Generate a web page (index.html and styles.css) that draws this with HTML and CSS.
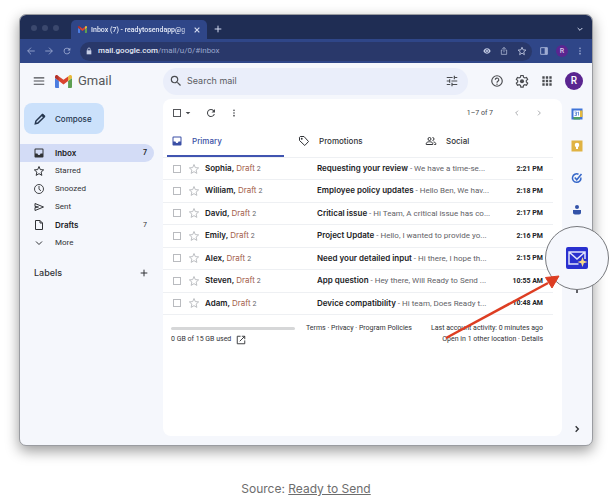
FILE: index.html
```html
<!DOCTYPE html>
<html lang="en">
<head>
<meta charset="utf-8">
<meta name="viewport" content="width=device-width, initial-scale=1">
<title>Inbox (7) - Gmail</title>
<link rel="stylesheet" href="styles.css">
</head>
<body>
<svg class="sprite" aria-hidden="true">
  <symbol id="star" viewBox="0 0 24 24"><path d="M12 3l2.6 6.2 6.7.6-5.1 4.4 1.5 6.6L12 17.3l-5.7 3.5 1.5-6.6L2.7 9.8l6.7-.6z" fill="none" stroke="currentColor" stroke-width="2"/></symbol>
  <symbol id="inbox" viewBox="0 0 24 24"><path d="M19 3H5a2 2 0 0 0-2 2v14c0 1.100.9 2 2 2h14a2 2 0 0 0 2-2V5a2 2 0 0 0-2-2zm0 10h-4c0 1.700-1.300 3-3 3s-3-1.300-3-3H5V5h14z" fill="currentColor"/></symbol>
  <symbol id="reload" viewBox="0 0 24 24"><path d="M17.650 6.350A8 8 0 1 0 19.730 14h-2.080A6 6 0 1 1 12 6c1.660 0 3.140.690 4.220 1.780L13 11h7V4z" fill="currentColor"/></symbol>
  <symbol id="dots" viewBox="0 0 24 24"><g fill="currentColor"><circle cx="12" cy="4" r="2.500"/><circle cx="12" cy="12" r="2.500"/><circle cx="12" cy="20" r="2.500"/></g></symbol>
  <symbol id="left" viewBox="0 0 24 24"><path d="M15 5l-7 7 7 7" fill="none" stroke="currentColor" stroke-width="2.500"/></symbol>
  <symbol id="right" viewBox="0 0 24 24"><path d="M9 5l7 7-7 7" fill="none" stroke="currentColor" stroke-width="2.500"/></symbol>
  <symbol id="down" viewBox="0 0 24 24"><path d="M5 9l7 7 7-7" fill="none" stroke="currentColor" stroke-width="3"/></symbol>
  <symbol id="plus" viewBox="0 0 24 24"><path d="M12 2v20M2 12h20" fill="none" stroke="currentColor" stroke-width="3"/></symbol>
  <symbol id="mark" viewBox="0 0 52 39"><path d="M3 39h9V18L0 9v27a3 3 0 0 0 3 3z" fill="#4c7de0"/><path d="M40 39h9a3 3 0 0 0 3-3V9l-12 9z" fill="#5d9f52"/><path d="M40 4v14l12-9V5c0-4.500-5-6.500-8.500-4z" fill="#e9b93c"/><path d="M12 18V4l14 10.500L40 4v14L26 28.500z" fill="#d9432f"/><path d="M0 5v4l12 9V4L8.500 1C5 -1.500 0 .5 0 5z" fill="#b5322a"/></symbol>
</svg>

<figure class="shot">
  <div class="window">
    <header class="tabstrip">
      <span class="lights"><i></i><i></i><i></i></span>
      <div class="tab">
        <svg class="tab-logo"><use href="#mark"/></svg>
        <span class="tab-title">Inbox (7) - readytosendapp@g</span>
        <button class="bare" aria-label="Close tab"><svg class="i8" viewBox="0 0 24 24"><path d="M5 5l14 14M19 5L5 19" stroke="currentColor" stroke-width="3.500"/></svg></button>
      </div>
      <button class="bare new-tab" aria-label="New tab"><svg class="i8"><use href="#plus"/></svg></button>
      <button class="bare tab-menu" aria-label="Search tabs"><svg class="i8"><use href="#down"/></svg></button>
    </header>

    <nav class="browser-bar" aria-label="Browser">
      <button class="bare" aria-label="Back"><svg class="i10" viewBox="0 0 24 24"><path d="M21 12H4m8-8l-8 8 8 8" fill="none" stroke="currentColor" stroke-width="2"/></svg></button>
      <button class="bare" aria-label="Forward"><svg class="i10" viewBox="0 0 24 24"><path d="M3 12h17m-8-8l8 8-8 8" fill="none" stroke="currentColor" stroke-width="2"/></svg></button>
      <button class="bare" aria-label="Reload"><svg class="i10"><use href="#reload"/></svg></button>
      <div class="address">
        <svg class="i8" viewBox="0 0 24 24"><path d="M5 10h14v12H5z" fill="currentColor"/><path d="M8 11V7a4 4 0 0 1 8 0v4" fill="none" stroke="currentColor" stroke-width="2.500"/></svg>
        <div class="url" role="textbox" contenteditable="true" spellcheck="false" aria-label="Address">mail.google.com<span>/mail/u/0/#inbox</span></div>
        <button class="bare" aria-label="View"><svg class="i8" viewBox="0 0 24 24"><path d="M1 12C4 6 8 4 12 4s8 2 11 8c-3 6-7 8-11 8S4 18 1 12z" fill="currentColor"/><circle cx="12" cy="12" r="4.500" fill="none" stroke="#29386a" stroke-width="2"/></svg></button>
        <button class="bare" aria-label="Share"><svg class="i8" viewBox="0 0 24 24"><path d="M8 9H4v13h16V9h-4M12 16V2M7 6l5-5 5 5" fill="none" stroke="currentColor" stroke-width="2"/></svg></button>
        <button class="bare" aria-label="Bookmark"><svg class="i10"><use href="#star"/></svg></button>
      </div>
      <button class="bare" aria-label="Side panel"><svg class="i8" viewBox="0 0 24 24"><path d="M2 2h20v20H2z" fill="none" stroke="currentColor" stroke-width="3"/><path d="M14 2h8v20h-8z" fill="currentColor"/></svg></button>
      <button class="avatar small" aria-label="Profile">R</button>
      <button class="bare" aria-label="Menu"><svg class="i8"><use href="#dots"/></svg></button>
    </nav>

    <div class="gmail">
      <header class="topbar">
        <div class="brand">
          <button class="bare" aria-label="Main menu"><svg class="i14" viewBox="0 0 24 24"><path d="M3 6.500h18M3 12h18M3 17.500h18" stroke="currentColor" stroke-width="2"/></svg></button>
          <svg class="logo"><use href="#mark"/></svg>
          <span class="wordmark">Gmail</span>
        </div>
        <form class="search">
          <button type="button" class="bare" aria-label="Search"><svg class="i14" viewBox="0 0 24 24"><path d="M15.500 14h-.790l-.280-.270A6.471 6.471 0 0 0 16 9.500 6.500 6.500 0 1 0 9.500 16c1.610 0 3.090-.590 4.230-1.570l.270.280v.790l5 4.990L20.490 19zm-6 0C7.010 14 5 11.990 5 9.500S7.010 5 9.500 5 14 7.010 14 9.500 11.990 14 9.500 14z" fill="currentColor"/></svg></button>
          <input type="text" placeholder="Search mail" aria-label="Search mail">
          <button type="button" class="bare" aria-label="Search options"><svg class="i14" viewBox="0 0 24 24"><path d="M3 17v2h6v-2zM3 5v2h10V5zm10 16v-2h8v-2h-8v-2h-2v6zM7 9v2H3v2h4v2h2V9zm14 4v-2H11v2zm-6-4h2V7h4V5h-4V3h-2z" fill="currentColor"/></svg></button>
        </form>
        <div class="account">
          <button class="bare" aria-label="Support"><svg class="i14" viewBox="0 0 24 24"><circle cx="12" cy="12" r="9" fill="none" stroke="currentColor" stroke-width="2"/><path d="M9 10a3 3 0 1 1 4.500 2.500C12.300 13.300 12 13.700 12 15" fill="none" stroke="currentColor" stroke-width="2"/><circle cx="12" cy="17.500" r="1.200" fill="currentColor"/></svg></button>
          <button class="bare" aria-label="Settings"><svg class="i14" viewBox="0 0 24 24"><path d="M10 2.500h4l.6 3 2.200 1.300 2.900-1 2 3.500-2.300 1.900v2.600l2.300 1.900-2 3.500-2.900-1-2.200 1.300-.6 3h-4l-.6-3-2.200-1.300-2.900 1-2-3.500 2.300-1.900v-2.600L2.300 9.300l2-3.500 2.900 1 2.200-1.300z" fill="none" stroke="currentColor" stroke-width="2"/><circle cx="12" cy="12.500" r="3.500" fill="currentColor"/></svg></button>
          <button class="bare" aria-label="Google apps"><svg class="i14" viewBox="0 0 24 24"><path d="M4 4h4v4H4zm6 0h4v4h-4zm6 0h4v4h-4zM4 10h4v4H4zm6 0h4v4h-4zm6 0h4v4h-4zM4 16h4v4H4zm6 0h4v4h-4zm6 0h4v4h-4z" fill="currentColor"/></svg></button>
          <button class="avatar" aria-label="Account">R</button>
        </div>
      </header>

      <aside class="sidebar">
        <button class="compose"><svg class="i14" viewBox="0 0 24 24"><path d="M4 20l1-4.500L16 4.500 19.500 8 8.500 19z" fill="none" stroke="currentColor" stroke-width="2.500"/><path d="M14 6l3-3.200 4.200 4.200L18 10z" fill="currentColor"/></svg>Compose</button>
        <nav class="folders" aria-label="Folders">
          <a href="#inbox" class="current"><svg class="i12"><use href="#inbox"/></svg><b>Inbox</b><b class="count">7</b></a>
          <a href="#starred"><svg class="i12"><use href="#star"/></svg>Starred</a>
          <a href="#snoozed"><svg class="i12" viewBox="0 0 24 24"><circle cx="12" cy="12" r="9" fill="none" stroke="currentColor" stroke-width="1.800"/><path d="M12 6v6.500l4 3" fill="none" stroke="currentColor" stroke-width="1.800"/></svg>Snoozed</a>
          <a href="#sent"><svg class="i12" viewBox="0 0 24 24"><path d="M4 5l17 7-17 7v-6l7-1-7-1z" fill="none" stroke="currentColor" stroke-width="2"/></svg>Sent</a>
          <a href="#drafts"><svg class="i12" viewBox="0 0 24 24"><path d="M5 3h9l5 5v13H5zM14 3v5h5" fill="none" stroke="currentColor" stroke-width="2"/></svg><b>Drafts</b><span class="count">7</span></a>
          <a href="#more"><svg class="i12" viewBox="0 0 24 24"><path d="M6 9l6 6 6-6" fill="none" stroke="currentColor" stroke-width="2"/></svg>More</a>
        </nav>
        <div class="labels"><h2>Labels</h2><button class="bare" aria-label="Create label"><svg class="i8"><use href="#plus"/></svg></button></div>
      </aside>

      <main class="panel">
        <div class="tools">
          <input type="checkbox" aria-label="Select all">
          <button class="bare caret" aria-label="Select menu"><svg class="i8" viewBox="0 0 24 24"><path d="M5 9h14l-7 7z" fill="currentColor"/></svg></button>
          <button class="bare refresh" aria-label="Refresh"><svg class="i12"><use href="#reload"/></svg></button>
          <button class="bare kebab" aria-label="More"><svg class="i8"><use href="#dots"/></svg></button>
          <span class="range">1–7 of 7</span>
          <button class="bare pager" aria-label="Newer"><svg class="i8"><use href="#left"/></svg></button>
          <button class="bare pager" aria-label="Older"><svg class="i8"><use href="#right"/></svg></button>
        </div>

        <nav class="tabs" aria-label="Categories">
          <a href="#primary" class="active"><svg class="i12"><use href="#inbox"/></svg>Primary</a>
          <a href="#promotions"><svg class="i12" viewBox="0 0 24 24"><path d="M3 4.500L4.500 3H12l9 10-7.500 8L3 11z" fill="none" stroke="currentColor" stroke-width="2"/><circle cx="7.500" cy="7.500" r="1.800" fill="currentColor"/></svg>Promotions</a>
          <a href="#social"><svg class="i12" viewBox="0 0 24 24"><g fill="none" stroke="currentColor" stroke-width="2"><circle cx="9" cy="8" r="3"/><path d="M2.500 19v-2c0-2 3-3.500 6.500-3.500s6.500 1.500 6.500 3.500v2z"/><path d="M15 5a3 3 0 0 1 0 6M17 14c3 .5 4.500 1.500 4.500 3v2h-3"/></g></svg>Social</a>
        </nav>

        <table class="mail">
          <colgroup><col class="c-check"><col class="c-star"><col class="c-name"><col class="c-subject"><col class="c-time"></colgroup>
          <tbody>
            <tr><td><input type="checkbox" aria-label="Select Sophia"></td><td><button class="bare" aria-label="Star"><svg class="i12"><use href="#star"/></svg></button></td><td><b>Sophia,</b> <em>Draft</em> <small>2</small></td><td class="subject"><b>Requesting your review</b> - We have a time-se...</td><td class="time">2:21 PM</td></tr>
            <tr><td><input type="checkbox" aria-label="Select William"></td><td><button class="bare" aria-label="Star"><svg class="i12"><use href="#star"/></svg></button></td><td><b>William,</b> <em>Draft</em> <small>2</small></td><td class="subject"><b>Employee policy updates</b> - Hello Ben, We hav...</td><td class="time">2:18 PM</td></tr>
            <tr><td><input type="checkbox" aria-label="Select David"></td><td><button class="bare" aria-label="Star"><svg class="i12"><use href="#star"/></svg></button></td><td><b>David,</b> <em>Draft</em> <small>2</small></td><td class="subject"><b>Critical issue</b> - Hi Team, A critical issue has co...</td><td class="time">2:17 PM</td></tr>
            <tr><td><input type="checkbox" aria-label="Select Emily"></td><td><button class="bare" aria-label="Star"><svg class="i12"><use href="#star"/></svg></button></td><td><b>Emily,</b> <em>Draft</em> <small>2</small></td><td class="subject"><b>Project Update</b> - Hello, I wanted to provide yo...</td><td class="time">2:16 PM</td></tr>
            <tr><td><input type="checkbox" aria-label="Select Alex"></td><td><button class="bare" aria-label="Star"><svg class="i12"><use href="#star"/></svg></button></td><td><b>Alex,</b> <em>Draft</em> <small>2</small></td><td class="subject"><b>Need your detailed input</b> - Hi there, I hope th...</td><td class="time">2:15 PM</td></tr>
            <tr><td><input type="checkbox" aria-label="Select Steven"></td><td><button class="bare" aria-label="Star"><svg class="i12"><use href="#star"/></svg></button></td><td><b>Steven,</b> <em>Draft</em> <small>2</small></td><td class="subject"><b>App question</b> - Hey there, Will Ready to Send ...</td><td class="time">10:55 AM</td></tr>
            <tr><td><input type="checkbox" aria-label="Select Adam"></td><td><button class="bare" aria-label="Star"><svg class="i12"><use href="#star"/></svg></button></td><td><b>Adam,</b> <em>Draft</em> <small>2</small></td><td class="subject"><b>Device compatibility</b> - Hi team, Does Ready t...</td><td class="time">10:48 AM</td></tr>
          </tbody>
        </table>

        <footer class="info">
          <div class="storage">
            <div class="meter"></div>
            <span class="used">0 GB of 15 GB used <svg class="i10" viewBox="0 0 24 24"><path d="M11 3H3v18h18v-8M14 3h7v7M21 3L9 15" fill="none" stroke="currentColor" stroke-width="2.200"/></svg></span>
          </div>
          <div class="legal">Terms · Privacy · Program Policies</div>
          <div class="activity">Last account activity: 0 minutes ago<br>Open in 1 other location · Details</div>
        </footer>
      </main>

      <aside class="rail">
        <button class="bare" aria-label="Calendar"><svg class="i12" viewBox="0 0 24 24"><path d="M1 1h22v22H1z" fill="#3f74d8"/><path d="M18 5h5v13h-5z" fill="#e5b93e"/><path d="M5 18h13v5H5z" fill="#4c9f62"/><path d="M5 5h13v13H5z" fill="#fff"/><path d="M7 8h4v7H7m1-3.500h3M13 9l2-1v7" fill="none" stroke="#4779ce" stroke-width="1.500"/></svg></button>
        <button class="bare" aria-label="Keep"><svg class="i12" viewBox="0 0 24 24"><path d="M1 1h22v22H1z" fill="#e0b343"/><circle cx="12" cy="10" r="4.500" fill="#fff"/><path d="M10 14h4v4h-4z" fill="#fff"/></svg></button>
        <button class="bare" aria-label="Tasks"><svg class="i12" viewBox="0 0 24 24"><path d="M15 4.500A8.500 8.500 0 1 0 19.800 11" fill="none" stroke="#3567c9" stroke-width="3"/><path d="M7.500 11l4 4.500L21 4" fill="none" stroke="#3567c9" stroke-width="3"/></svg></button>
        <button class="bare" aria-label="Contacts"><svg class="i12" viewBox="0 0 24 24"><circle cx="12" cy="6" r="4" fill="#3353a8"/><path d="M4 12h16v5c0 2-1.500 4-4 4H8c-2.500 0-4-2-4-4z" fill="#3353a8"/></svg></button>
        <button class="bare add" aria-label="Get add-ons"><svg class="i12"><use href="#plus"/></svg></button>
        <button class="bare collapse" aria-label="Hide side panel"><svg class="i8" viewBox="0 0 24 24"><path d="M8 4l8 8-8 8" fill="none" stroke="currentColor" stroke-width="4"/></svg></button>
        <div class="lens"><svg viewBox="0 0 24 24"><rect x="1" y="1" width="22" height="22" rx="2" fill="#2930cf"/><path d="M13.500 18H4V6h16v7M4 6l8 7 8-7" fill="none" stroke="#dfe2fa" stroke-width="1.500"/><path d="M17.500 11l1.300 3.700 3.700 1.300-3.700 1.300-1.300 3.700-1.300-3.700-3.700-1.300 3.700-1.300z" fill="#f6d987"/></svg></div>
        <svg class="pointer" viewBox="0 0 116 66" aria-hidden="true"><path d="M1 63L103 8" stroke="#dd3d22" stroke-width="2.500"/><path d="M114 1l-7 12-6.500-10.500z" fill="#dd3d22" stroke="#dd3d22" stroke-width="1"/></svg>
      </aside>
    </div>
  </div>
  <figcaption>Source: <a href="#source">Ready to Send</a></figcaption>
</figure>
</body>
</html>
```
FILE: styles.css
```css
* { box-sizing: border-box; }

body {
  margin: 0;
  background: #fff;
  color: #303236;
  font: 8px/12px Roboto, "Liberation Sans", sans-serif;
}

svg { display: block; flex: none; }
a { color: inherit; text-decoration: none; }
button, input { font: inherit; color: inherit; }
b { font-family: Inter, "Liberation Sans", sans-serif; font-weight: 600; color: #202124; }

.sprite { position: absolute; width: 0; height: 0; }
.i8 { width: 8px; height: 8px; }
.i10 { width: 10px; height: 10px; }
.i12 { width: 12px; height: 12px; }
.i14 { width: 14px; height: 14px; }

.bare {
  flex: none;
  padding: 0;
  border: 0;
  background: none;
}

.shot { margin: 0; padding: 14px 19px 0; }

.window {
  border: 1px solid #9a9ca1;
  border-radius: 7px;
  background: #f5f7fc;
  box-shadow: 0 5px 14px rgba(0, 0, 0, .4);
}

/* Browser chrome */
.tabstrip {
  display: flex;
  align-items: flex-end;
  height: 24px;
  border-radius: 6px 6px 0 0;
  background: #1f2d54;
  color: #d3daf0;
}

.lights { display: flex; gap: 5px; width: 51px; padding: 0 0 8px 11px; }
.lights i { width: 6px; height: 6px; border-radius: 50%; background: #3b486d; }

.tab {
  display: flex;
  align-items: center;
  gap: 4px;
  width: 136px;
  height: 19px;
  padding: 0 6px 0 7px;
  border-radius: 5px 5px 0 0;
  background: #2f4688;
}
.tab-logo { width: 9px; height: 7px; }
.tab-title {
  flex: 1;
  white-space: nowrap;
  font-size: 7px;
  font-weight: 500;
  color: #e3e8f6;
  mask-image: linear-gradient(90deg, #000 90%, rgba(0, 0, 0, .3));
}
.new-tab { margin: 0 0 6px 7px; }
.tab-menu { margin: 0 8px 6px auto; }

.browser-bar {
  display: flex;
  align-items: center;
  gap: 8px;
  height: 24px;
  padding: 0 8px 0 6px;
  background: #2f4688;
  color: #9eabd2;
}

.address {
  display: flex;
  flex: 1;
  align-items: center;
  gap: 9px;
  height: 19px;
  padding: 0 5px;
  border-radius: 10px;
  background: #29386a;
  color: #c6cee6;
}
.url { flex: 1; margin-left: -4px; white-space: nowrap; color: #e6eaf6; font-weight: 500; }
.url span { color: #9aa7cc; font-weight: 400; }

.avatar {
  width: 18px;
  height: 18px;
  padding: 0;
  border: 0;
  border-radius: 50%;
  background: #5a2590;
  color: #fff;
  font-size: 10px;
  font-weight: 500;
}
.avatar.small { width: 12px; height: 12px; font-size: 7px; line-height: 12px; color: #dccbe9; }

/* Mail application */
.gmail {
  display: grid;
  grid-template-columns: 143px minmax(0, 1fr) 30px;
  grid-template-rows: 36px auto;
  padding-bottom: 9px;
}

.topbar {
  grid-column: 1 / -1;
  display: grid;
  grid-template-columns: 143px 1fr 124px;
  align-items: center;
  color: #4a4c50;
}
.brand { display: flex; align-items: center; gap: 9px; padding-left: 12px; }
.logo { width: 17px; height: 13px; }
.wordmark { font-size: 13px; line-height: 18px; color: #55575b; margin-left: -3px; }

.search {
  display: flex;
  align-items: center;
  gap: 4px;
  height: 27px;
  padding: 0 9px 0 6px;
  border-radius: 14px;
  background: #eaeefa;
}
.search input {
  flex: 1;
  min-width: 0;
  padding: 0;
  border: 0;
  outline: 0;
  background: none;
  font-family: Inter, sans-serif;
  font-size: 9px;
}
.search input::placeholder { color: #5a5c62; opacity: 1; }

.account { display: flex; align-items: center; justify-content: flex-end; gap: 11px; padding-right: 9px; }

.sidebar { padding: 4px 9px 0 0; }

.compose {
  display: flex;
  align-items: center;
  gap: 8px;
  width: 80px;
  height: 31px;
  margin: 0 0 10px 4px;
  padding: 0 0 0 9px;
  border: 0;
  border-radius: 8px;
  background: #cbe1fb;
  color: #25364e;
  font-family: Inter, sans-serif;
  font-weight: 500;
}

.folders a {
  display: flex;
  align-items: center;
  gap: 10px;
  height: 18px;
  padding: 0 7px 0 13px;
  border-radius: 0 9px 9px 0;
}
.folders .current { background: #d3dcf6; }
.count { margin-left: auto; font-size: 7px; }

.labels { display: flex; align-items: center; justify-content: space-between; margin-top: 14px; padding: 0 6px 0 14px; }
h2 { margin: 0; font: 500 9px/14px Inter, sans-serif; }

.panel {
  min-height: 337px;
  border-radius: 8px;
  background: #fff;
}

.tools { display: flex; align-items: center; height: 27px; padding: 0 19px 0 10px; color: #46484c; }
.caret { margin-left: 3px; }
.refresh { margin-left: 13px; }
.kebab { margin-left: 13px; }
.range { margin-left: auto; font-size: 7px; }
.pager { margin-left: 20px; color: #9a9ca0; }
.pager + .pager { margin-left: 14px; }

input[type="checkbox"] {
  appearance: none;
  display: block;
  flex: none;
  width: 8px;
  height: 8px;
  margin: 0;
  border: 1px solid #b9bbbf;
}
.tools input[type="checkbox"] { border-color: #55575b; }

.tabs {
  display: grid;
  grid-template-columns: repeat(3, 1fr);
  height: 32px;
  margin-right: 9px;
  padding: 0 15px 0 4px;
  column-gap: 10px;
  border-bottom: 1px solid #eef0f3;
}
.tabs a {
  display: flex;
  align-items: center;
  gap: 9px;
  padding-left: 4px;
  border-bottom: 2px solid transparent;
  font-family: Inter, sans-serif;
  font-weight: 500;
}
.tabs .active { color: #3a4fa5; border-bottom-color: #4054b0; }

.mail {
  width: calc(100% - 9px);
  height: 157px;
  border-collapse: collapse;
  table-layout: fixed;
  white-space: nowrap;
}
.c-check { width: 25px; }
.c-star { width: 17px; }
.c-name { width: 112px; }
.c-time { width: 54px; }
.mail td { padding: 0; border-bottom: 1px solid #eef0f3; vertical-align: middle; color: #5f6267; }
.mail td:first-child { padding-left: 10px; }
.mail td .bare { display: block; color: #bdbfc3; }
.mail em { font-family: Inter, sans-serif; font-style: normal; color: #a35e4b; }
.mail small { font-size: 7px; }
.mail .time { padding-right: 10px; text-align: right; font-size: 7px; font-weight: 700; color: #202124; }

.info {
  display: grid;
  grid-template-columns: 124px auto 1fr;
  gap: 11px;
  padding: 8px 19px 0 8px;
  font-size: 7px;
  line-height: 11px;
  white-space: nowrap;
}
.meter { height: 3px; margin: 4px 0; border-radius: 2px; background: #d6d7d8; }
.used { display: flex; align-items: center; gap: 5px; }
.activity { text-align: right; }

.rail { position: relative; display: flex; flex-direction: column; align-items: center; gap: 20px; padding-top: 9px; }
.rail .add { margin-top: 46px; }
.rail .collapse { margin-top: auto; margin-bottom: 3px; }

/* Magnifier and arrow drawn over the side panel */
.lens {
  position: absolute;
  z-index: 1;
  top: 127px;
  right: -17px;
  display: grid;
  place-items: center;
  width: 64px;
  height: 64px;
  border: 1px solid #77797d;
  border-radius: 50%;
  background: #f5f7fc;
}
.lens svg { width: 24px; height: 24px; }
.pointer { position: absolute; z-index: 2; top: 176px; right: 31px; width: 116px; height: 66px; }

figcaption {
  padding-top: 34px;
  text-align: center;
  font: 12px/17px Inter, "Liberation Sans", sans-serif;
  color: #6d6d6d;
}
figcaption a { text-decoration: underline; }
```
